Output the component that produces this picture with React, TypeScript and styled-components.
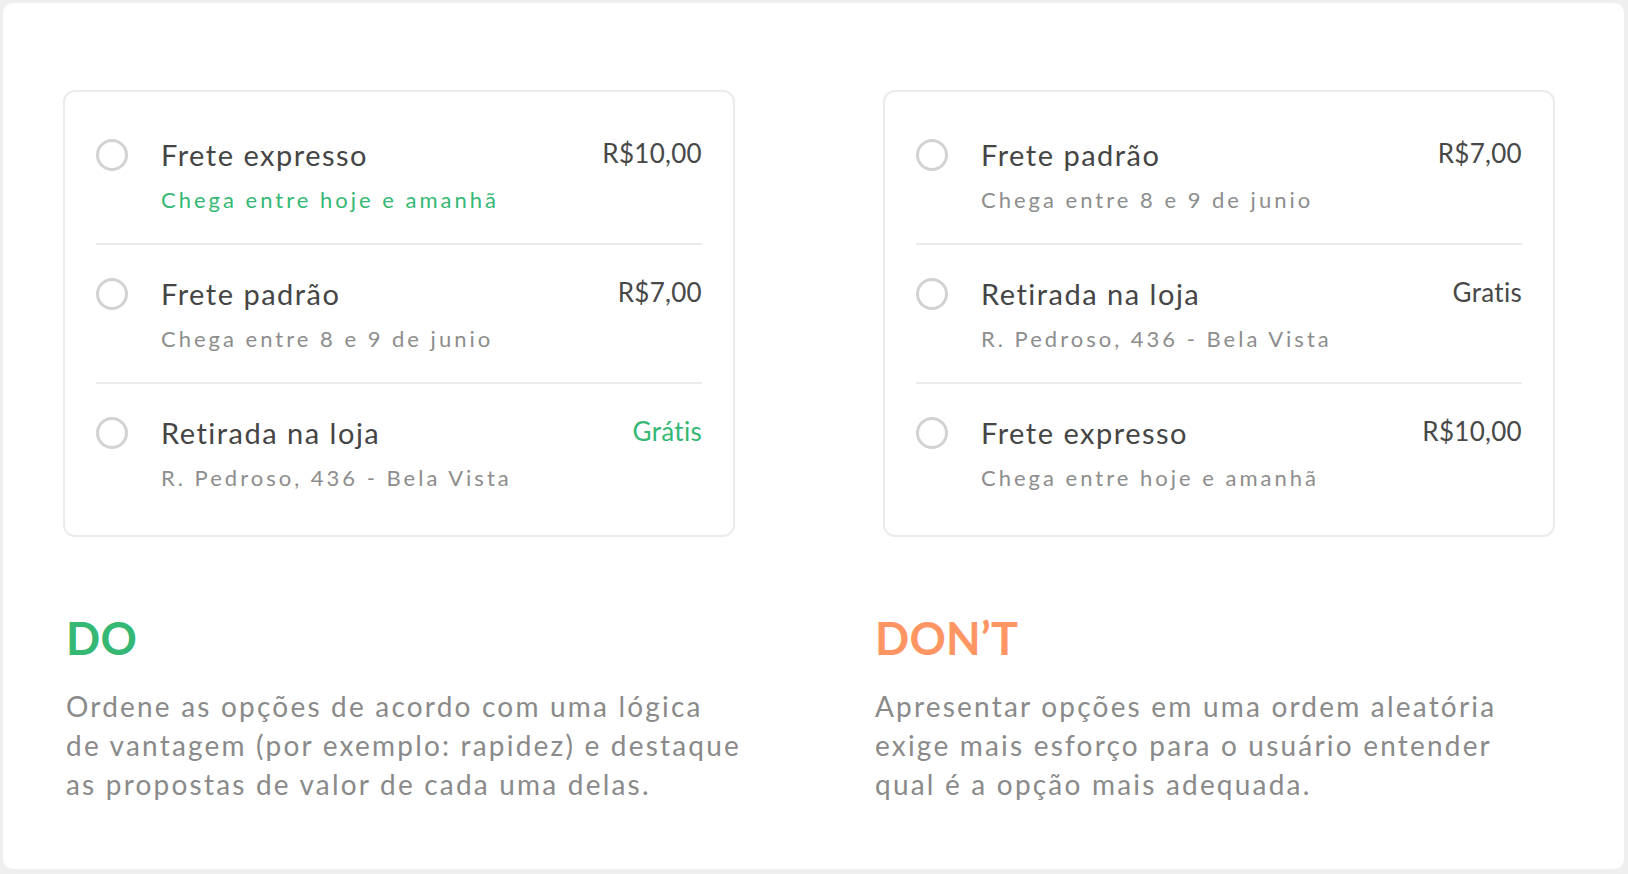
import React from "react";
import styled, { createGlobalStyle } from "styled-components";

const GlobalStyle = createGlobalStyle`
  html, body {
    margin: 0;
    padding: 0;
    background: #efefef;
  }
  body {
    font-family: "Lato", "Noto Sans", sans-serif;
    -webkit-font-smoothing: antialiased;
  }
`;

const Frame = styled.div`
  margin: 3px 0 0 3px;
  width: 1621px;
  height: 866px;
  box-sizing: border-box;
  background: #ffffff;
  border-radius: 10px;
  padding: 87px 0 0 60px;
`;

const CardsGrid = styled.div`
  display: grid;
  grid-template-columns: 672px 672px;
  column-gap: 148px;
`;

const Card = styled.div`
  box-sizing: border-box;
  border: 2px solid #ebebeb;
  border-radius: 12px;
  padding: 14px 31px;
  background: #fff;
`;

const Row = styled.div`
  display: grid;
  grid-template-columns: 32px 1fr auto;
  column-gap: 33px;
  padding: 33px 0 29px;
  border-bottom: 2px solid #ebebeb;
  &:last-child {
    border-bottom: none;
  }
`;

const Radio = styled.span`
  box-sizing: border-box;
  width: 32px;
  height: 32px;
  border: 3px solid #d2d2d2;
  border-radius: 50%;
`;

const Info = styled.div`
  display: flex;
  flex-direction: column;
`;

const Title = styled.div`
  font-size: 29px;
  line-height: 32px;
  color: #454545;
  letter-spacing: 1.5px;
`;

const Sub = styled.div<{ $green?: boolean }>`
  margin-top: 15px;
  font-size: 22px;
  line-height: 28px;
  letter-spacing: 3px;
  color: ${(p) => (p.$green ? "#34b874" : "#8d8d8d")};
`;

const Price = styled.div<{ $green?: boolean }>`
  margin-top: -2px;
  font-size: 26px;
  line-height: 32px;
  letter-spacing: 0.3px;
  color: ${(p) => (p.$green ? "#34b874" : "#484848")};
`;

const TextGrid = styled.div`
  margin-top: 74px;
  padding-left: 3px;
  display: grid;
  grid-template-columns: 809px 1fr;
`;

const Block = styled.div`
  display: flex;
  flex-direction: column;
`;

const Heading = styled.h2<{ $tone: "do" | "dont" }>`
  margin: 0;
  font-size: 45px;
  line-height: 54px;
  font-weight: 700;
  letter-spacing: 0.2px;
  color: ${(p) => (p.$tone === "do" ? "#34b874" : "#fe9562")};
`;

const Body = styled.p`
  margin: 22px 0 0;
  font-size: 28px;
  line-height: 39px;
  letter-spacing: 2.2px;
  color: #8a8a8a;
`;

type Option = {
  title: string;
  sub: string;
  price: string;
  greenSub?: boolean;
  greenPrice?: boolean;
};

const left: Option[] = [
  { title: "Frete expresso", sub: "Chega entre hoje e amanhã", price: "R$10,00", greenSub: true },
  { title: "Frete padrão", sub: "Chega entre 8 e 9 de junio", price: "R$7,00" },
  { title: "Retirada na loja", sub: "R. Pedroso, 436 - Bela Vista", price: "Grátis", greenPrice: true },
];

const right: Option[] = [
  { title: "Frete padrão", sub: "Chega entre 8 e 9 de junio", price: "R$7,00" },
  { title: "Retirada na loja", sub: "R. Pedroso, 436 - Bela Vista", price: "Gratis" },
  { title: "Frete expresso", sub: "Chega entre hoje e amanhã", price: "R$10,00" },
];

const OptionCard = ({ items }: { items: Option[] }) => (
  <Card>
    {items.map((o) => (
      <Row key={o.title}>
        <Radio />
        <Info>
          <Title>{o.title}</Title>
          <Sub $green={o.greenSub}>{o.sub}</Sub>
        </Info>
        <Price $green={o.greenPrice}>{o.price}</Price>
      </Row>
    ))}
  </Card>
);

export default function App() {
  return (
    <>
      <GlobalStyle />
      <Frame>
        <CardsGrid>
          <OptionCard items={left} />
          <OptionCard items={right} />
        </CardsGrid>
        <TextGrid>
          <Block>
            <Heading $tone="do">DO</Heading>
            <Body>
              Ordene as opções de acordo com uma lógica
              <br />
              de vantagem (por exemplo: rapidez) e destaque
              <br />
              as propostas de valor de cada uma delas.
            </Body>
          </Block>
          <Block>
            <Heading $tone="dont">DON’T</Heading>
            <Body>
              Apresentar opções em uma ordem aleatória
              <br />
              exige mais esforço para o usuário entender
              <br />
              qual é a opção mais adequada.
            </Body>
          </Block>
        </TextGrid>
      </Frame>
    </>
  );
}
